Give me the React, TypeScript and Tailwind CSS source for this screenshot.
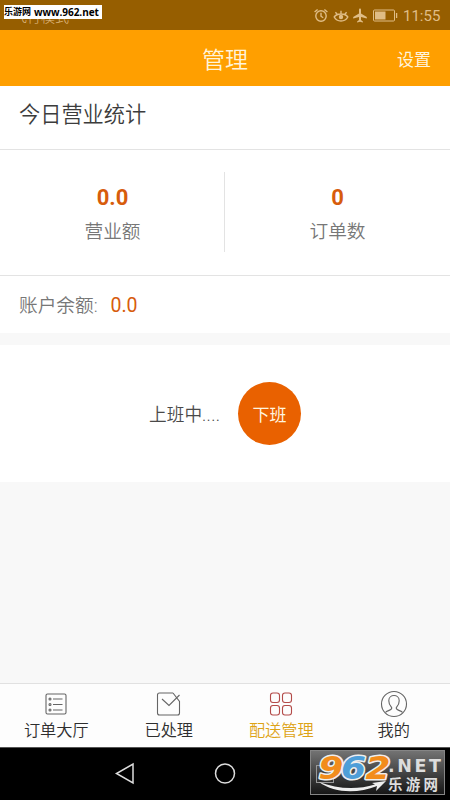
import React from "react";

const cjk = "font-['Roboto','Noto_Sans_CJK_SC',sans-serif]";

function StatusBar() {
  return (
    <div className="relative flex h-[30px] shrink-0 items-center justify-end overflow-hidden bg-[#965e00] pr-[10px] text-[#e0bd86]">
      <span className="absolute left-[13px] top-[7px] text-[14px] font-light leading-[20px]">飞行模式</span>
      <div className="absolute left-[4px] top-[5px] flex h-[14px] w-[98px] items-center gap-[3px] whitespace-nowrap bg-white text-[9px] font-bold leading-[14px] text-black">
        <span>乐游网</span>
        <span className="font-['Open_Sans',sans-serif] text-[10px] tracking-[-0.05px]">www.962.net</span>
      </div>
      <svg className="mr-[5px] h-[15px] w-[14px]" viewBox="0 0 14 15" fill="none" stroke="currentColor" strokeWidth="1.4">
        <circle cx="7" cy="8" r="5.2" />
        <path d="M7 4.8V8.2L9.2 9.8M.6 4L3.6 1.5M13.4 4L10.4 1.5" />
      </svg>
      <svg className="mr-[4px] h-[15px] w-[16px]" viewBox="0 0 16 15" fill="none" stroke="currentColor" strokeWidth="1.4">
        <path d="M1.2 9C4 5 12 5 14.8 9C12 14.3 4 14.3 1.2 9ZM8 5.7V2.8M4.2 6.2L2.4 4.2M11.8 6.2L13.6 4.2" />
        <circle cx="8" cy="9" r="2.2" fill="currentColor" stroke="none" />
      </svg>
      <svg className="mr-[5px] h-[15px] w-[14px]" viewBox="0 0 14 15" fill="currentColor">
        <path d="M6 1.8C6 .2 8 .2 8 1.8V5.6L13.8 9V10.5L8 8.9V12L9.9 13.4V14.6L7 13.8L4.1 14.6V13.4L6 12V8.9L.2 10.5V9L6 5.6Z" />
      </svg>
      <svg className="mr-[5px] h-[13px] w-[26px]" viewBox="0 0 26 13" fill="none" stroke="currentColor">
        <rect x="1.5" y="1" width="21" height="11" rx="1" />
        <path d="M3 2.5H13.5V10.5H3Z" fill="currentColor" stroke="none" />
        <path d="M24.6 4V9" strokeWidth="1.3" />
      </svg>
      <span className="w-[37px] whitespace-nowrap pt-[1px] text-[15px] leading-[30px]">11:55</span>
    </div>
  );
}

function Stat({ value, label }: { value: string; label: string }) {
  return (
    <div className="flex flex-1 flex-col items-center pt-[35px]">
      <b className="text-[22px] font-bold leading-[26px] text-[#d75c0c]">{value}</b>
      <span className="mt-[8px] text-[18.7px] font-[350] leading-[26px] text-[#777]">{label}</span>
    </div>
  );
}

function Tab({ label, active, children }: { label: string; active?: boolean; children: React.ReactNode }) {
  return (
    <div className="flex flex-1 flex-col items-center pt-[6px]">
      <svg className={`h-[28px] w-[28px] ${active ? "text-[#b34b49]" : "text-[#656565]"}`} viewBox="0 0 28 28" fill="none" stroke="currentColor" strokeWidth="1.1">
        {children}
      </svg>
      <span className={`mt-[2px] text-[16.2px] font-[350] leading-[22px] ${active ? "text-[#dda315]" : "text-[#2e2e2e]"}`}>{label}</span>
    </div>
  );
}

function Watermark() {
  return (
    <svg className="absolute left-[310px] top-[2px] h-[45px] w-[135px]" viewBox="0 0 135 45">
      <defs>
        <linearGradient id="plate" x1="0" y1="0" x2="0" y2="1">
          <stop offset="0" stopColor="#747474" />
          <stop offset="1" stopColor="#151515" />
        </linearGradient>
      </defs>
      <rect x=".5" y=".5" width="134" height="44" fill="url(#plate)" stroke="#858585" />
      <rect x="6.5" y="15.5" width="17" height="17" fill="none" stroke="#999" />
      <path d="M9 32C24 43 47 44 67 36L66 41L76 31L62 33L65 34.5C47 40 27 39 9 32Z" fill="#eee" />
      <g fontFamily="DejaVu Sans, sans-serif" fontWeight="700" fontStyle="italic" fontSize="32" strokeWidth="3" strokeLinejoin="round" paintOrder="stroke" stroke="#eee">
        <text x="8.5" y="28.5" fill="#f28c1b" textLength="25" lengthAdjust="spacingAndGlyphs">9</text>
        <text x="31" y="28.5" fill="#4e9ed8" textLength="25" lengthAdjust="spacingAndGlyphs">6</text>
        <text x="55.5" y="28.5" fill="#f28c1b" textLength="25" lengthAdjust="spacingAndGlyphs">2</text>
      </g>
      <text x="78" y="22" fill="#ddd" fontFamily="DejaVu Sans, sans-serif" fontWeight="700" fontSize="17.5" textLength="53" lengthAdjust="spacing">.NET</text>
      <text x="78" y="40" fill="#ddd" fontFamily="Noto Sans CJK SC, sans-serif" fontWeight="700" fontSize="14.5" textLength="50">乐游网</text>
    </svg>
  );
}

export default function App() {
  return (
    <div className={`flex h-[800px] w-[450px] flex-col overflow-hidden bg-[#f8f8f8] ${cjk}`}>
      <StatusBar />
      <header className="grid h-[56px] shrink-0 grid-cols-3 items-center bg-[#ff9f00] text-[#fff4dc]">
        <span />
        <h1 className="pt-[5px] text-center text-[23px] font-[350] leading-[32px]">管理</h1>
        <span className="pr-[19px] pt-[3px] text-right text-[17px] leading-[24px]">设置</span>
      </header>
      <section className="h-[247px] shrink-0 bg-white">
        <h2 className="h-[64px] border-b border-[#e3e3e3] pl-[19px] pt-[13px] text-[21.2px] font-[350] leading-[32px] text-[#3c3c3c]">今日营业统计</h2>
        <div className="grid h-[126px] grid-cols-2 border-b border-[#e3e3e3]">
          <div className="relative flex">
            <Stat value="0.0" label="营业额" />
            <div className="absolute right-0 top-[22px] h-[80px] w-px bg-[#e3e3e3]" />
          </div>
          <Stat value="0" label="订单数" />
        </div>
        <div className="flex h-[57px] items-center pl-[19px] pt-[2px]">
          <span className="w-[91.5px] whitespace-nowrap pt-[2px] text-[18.7px] font-[350] text-[#777]">账户余额:</span>
          <span className="pt-[1px] text-[19.5px] text-[#d75c0c]">0.0</span>
        </div>
      </section>
      <section className="mt-[12px] flex h-[137px] shrink-0 items-center bg-white pl-[149px]">
        <span className="w-[89px] whitespace-nowrap pt-[3px] text-[17.7px] font-[350] text-[#4a4a4a]">上班中<span className="tracking-[0.3px]">....</span></span>
        <button className="h-[63px] w-[63px] rounded-full bg-[#e96100] pt-[4px] text-[17px] text-[#fff4df]">下班</button>
      </section>
      <nav className="mt-auto flex h-[64px] shrink-0 border-t border-[#e1e1e1] bg-[#fdfdfd]">
        <Tab label="订单大厅">
          <rect x="4" y="4" width="20" height="20" rx="1.5" />
          <path d="M11 9H20.5M11 14.5H20.5M11 20H20.5" />
          <circle cx="8" cy="9" r="1" /><circle cx="8" cy="14.5" r="1" /><circle cx="8" cy="20" r="1" />
        </Tab>
        <Tab label="已处理">
          <path d="M18 3H4.5Q2.5 3 2.5 5V23Q2.5 25 4.5 25H22.5Q24.5 25 24.5 23V11.5L18 3M7 9L14 15.5L24.5 5" />
        </Tab>
        <Tab label="配送管理" active>
          <rect x="3.5" y="3" width="9" height="9.5" rx="2.5" /><rect x="15.5" y="3" width="9" height="9.5" rx="2.5" />
          <rect x="3.5" y="15.5" width="9" height="9.5" rx="2.5" /><rect x="15.5" y="15.5" width="9" height="9.5" rx="2.5" />
        </Tab>
        <Tab label="我的">
          <circle cx="14" cy="14" r="12.5" />
          <path d="M5.5 22.5C6.5 20.5 11.8 20.5 11.8 18C11.8 16.8 8.8 15.5 8.8 10.7C8.8 3.8 19.2 3.8 19.2 10.7C19.2 15.5 16.2 16.8 16.2 18C16.2 20.5 21.5 20.5 22.5 22.5" />
        </Tab>
      </nav>
      <footer className="relative h-[53px] shrink-0 border-t border-[#555] bg-black">
        <svg className="h-[52px] w-[450px]" viewBox="0 0 450 52" fill="none" stroke="#ddd" strokeWidth="1.5">
          <path d="M133 16V35L116.5 25.5Z" />
          <circle cx="225" cy="25.5" r="9.5" />
        </svg>
        <Watermark />
      </footer>
    </div>
  );
}
